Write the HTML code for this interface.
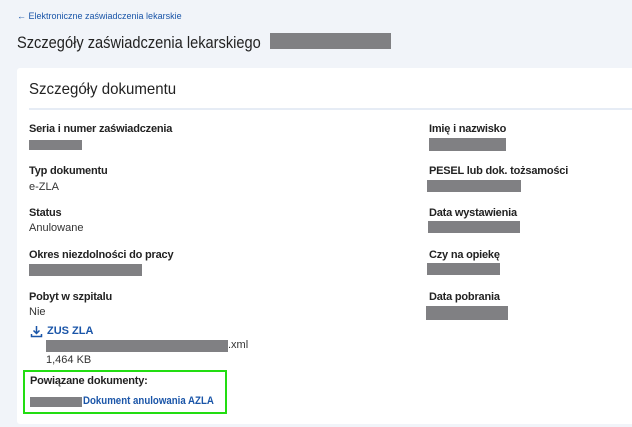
<!DOCTYPE html><html><head><meta charset="utf-8"><style>
body{margin:0;width:632px;height:427px;background:#f1f4f9;font-family:"Liberation Sans",sans-serif;position:relative;overflow:hidden}
.a{position:absolute;white-space:nowrap}
.g{position:absolute;background:#808083}
.l{font-size:11px;font-weight:bold;color:#222;letter-spacing:-0.2px}
.v{font-size:11px;color:#333}
.s{transform-origin:0 0}
</style></head><body>
<div class="a" style="left:17px;top:11px;font-size:9px;color:#1a55a8">&#8592; Elektroniczne zaświadczenia lekarskie</div>
<div class="a s" style="left:17px;top:33px;font-size:17px;color:#222;transform:scaleX(0.86)">Szczegóły zaświadczenia lekarskiego</div>
<div class="g" style="left:270px;top:33px;width:121px;height:16px"></div>
<div class="a" style="left:17px;top:68px;width:620px;height:356px;background:#fff;border-radius:3px"></div>
<div class="a s" style="left:29px;top:81px;font-size:16px;color:#222;transform:scaleX(0.94)">Szczegóły dokumentu</div>
<div class="a" style="left:29px;top:108px;width:610px;height:2px;background:#e6ecf5"></div>

<div class="a l" style="left:29px;top:123px">Seria i numer zaświadczenia</div>
<div class="g" style="left:29px;top:140px;width:53px;height:10px"></div>
<div class="a l" style="left:29px;top:165px">Typ dokumentu</div>
<div class="a v" style="left:29px;top:181px">e-ZLA</div>
<div class="a l" style="left:29px;top:207px">Status</div>
<div class="a v" style="left:29px;top:222px">Anulowane</div>
<div class="a l" style="left:29px;top:249px">Okres niezdolności do pracy</div>
<div class="g" style="left:29px;top:264px;width:113px;height:12px"></div>
<div class="a l" style="left:29px;top:291px">Pobyt w szpitalu</div>
<div class="a v" style="left:29px;top:306px">Nie</div>
<svg class="a" style="left:30px;top:325px" width="13" height="13" viewBox="0 0 13 13" fill="none" stroke="#1a55a8" stroke-width="1.5"><path d="M6.5 1v7M3.5 5.5l3 3 3-3M1.5 9v2.5h10V9"/></svg>
<div class="a" style="left:47px;top:325px;font-size:11px;font-weight:bold;color:#1a55a8">ZUS ZLA</div>
<div class="g" style="left:46px;top:340px;width:182px;height:12px"></div>
<div class="a v" style="left:228px;top:339px">.xml</div>
<div class="a v" style="left:46px;top:354px">1,464 KB</div>
<div class="a" style="left:23px;top:370px;width:200px;height:40px;border:2px solid #22dd11"></div>
<div class="a l" style="left:30px;top:375px">Powiązane dokumenty:</div>
<div class="g" style="left:30px;top:397px;width:52px;height:10px"></div>
<div class="a s" style="left:83px;top:395px;font-size:11px;font-weight:bold;color:#1a55a8;transform:scaleX(0.88)">Dokument anulowania AZLA</div>

<div class="a l" style="left:429px;top:123px">Imię i nazwisko</div>
<div class="g" style="left:429px;top:138px;width:77px;height:13px"></div>
<div class="a l" style="left:429px;top:165px">PESEL lub dok. tożsamości</div>
<div class="g" style="left:427px;top:180px;width:94px;height:12px"></div>
<div class="a l" style="left:429px;top:207px">Data wystawienia</div>
<div class="g" style="left:428px;top:221px;width:92px;height:12px"></div>
<div class="a l" style="left:429px;top:249px">Czy na opiekę</div>
<div class="g" style="left:427px;top:263px;width:73px;height:12px"></div>
<div class="a l" style="left:429px;top:291px">Data pobrania</div>
<div class="g" style="left:426px;top:306px;width:82px;height:14px"></div>
</body></html>
